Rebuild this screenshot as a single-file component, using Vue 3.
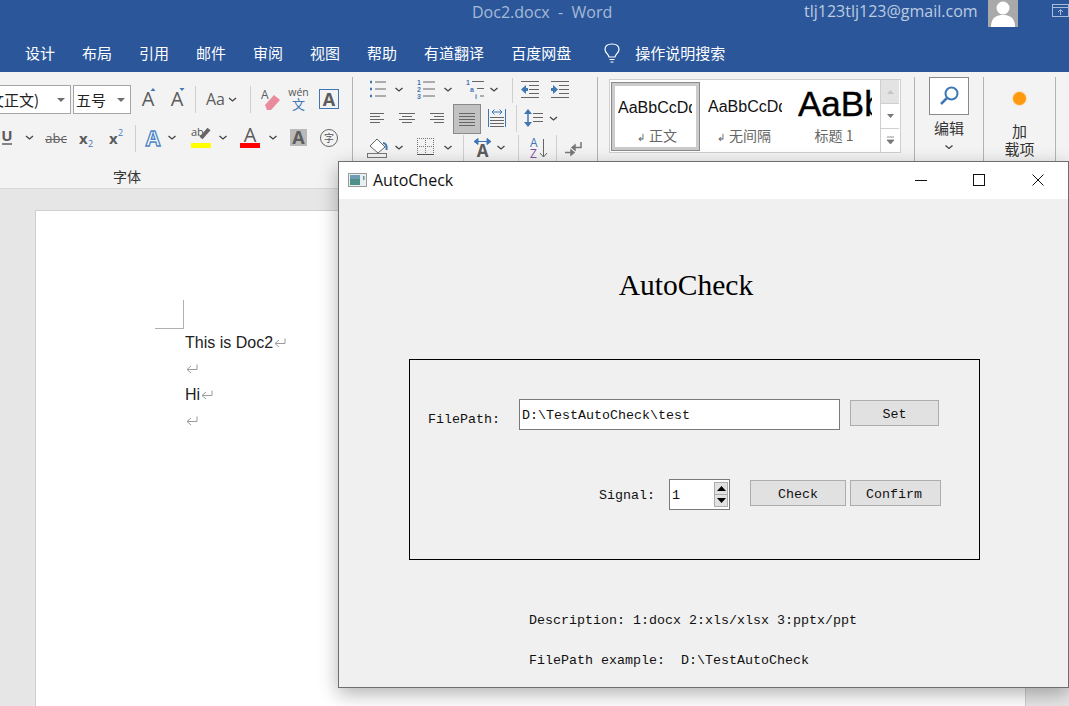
<template>
  <div class="word">
    <header class="titlebar">
      <span class="doc-title">Doc2.docx&nbsp; - &nbsp;Word</span>
      <span class="email">tlj123tlj123@gmail.com</span>
      <svg class="avatar" width="30" height="27">
        <rect width="30" height="27" fill="#a9a9a9" />
        <circle cx="15" cy="8" r="6.5" fill="#fff" />
        <path d="M3 27 C3 17 9 15 15 15 C21 15 27 17 27 27 Z" fill="#fff" />
      </svg>
      <svg class="restore" width="17" height="14">
        <rect x="0.5" y="0.5" width="16" height="12" fill="none" stroke="#a9bcd8" />
        <path d="M1 3.5 H16 M8.5 11 V6 M6 8 L8.5 5.5 L11 8" fill="none" stroke="#a9bcd8" />
      </svg>
    </header>

    <nav class="tabs">
      <span v-for="tab in tabs" :key="tab">{{ tab }}</span>
      <svg class="bulb" width="16" height="20">
        <path d="M5 14 C4.500 11 1 10 1 6.500 C1 3 4 1 8 1 C12 1 15 3 15 6.500 C15 10 11.500 11 11 14 Z M5.500 16.500 H10.500 M6.500 19 H9.500" fill="none" stroke="#fff" stroke-width="1.200" />
      </svg>
      <span class="search-tip">操作说明搜索</span>
    </nav>

    <section class="ribbon">
      <div class="group font-group">
        <div class="row row-a">
          <div class="combo family"><span>等线 (中文正文)</span><i class="caret"></i></div>
          <div class="combo size"><span>五号</span><i class="caret"></i></div>
          <svg class="ic" width="32" height="30">
            <text x="17" y="21" class="glyph" font-size="20" text-anchor="middle">A</text>
            <path d="M19.500 6 L22 3 L24.500 6 Z" class="blue-fill" />
          </svg>
          <svg class="ic" width="27" height="30">
            <text x="14" y="21" class="glyph" font-size="20" text-anchor="middle">A</text>
            <path d="M16.500 3 L19 6 L21.500 3 Z" class="blue-fill" />
          </svg>
          <svg class="ic" width="10" height="30"><path d="M5.500 1 V28" class="rule" /></svg>
          <svg class="ic" width="42" height="30">
            <text x="6" y="20" class="glyph" font-size="16">Aa</text>
            <path d="M29 13 L32.500 16 L36 13" class="chev" />
          </svg>
          <svg class="ic" width="16" height="30"><path d="M8.500 1 V28" class="rule" /></svg>
          <svg class="ic" width="26" height="30">
            <text x="3" y="14" class="glyph" font-size="12">A</text>
            <path d="M7 20 L16 10 L22 15 L13 25 L9 25 Z" fill="#e98a9d" stroke="none" />
          </svg>
          <svg class="ic" width="29" height="30">
            <text x="14.500" y="11" class="thin" font-size="10.500" text-anchor="middle">wén</text>
            <text x="14.500" y="24" class="blue-text" font-size="13" text-anchor="middle">文</text>
          </svg>
          <svg class="ic" width="32" height="30">
            <rect x="6.500" y="4.500" width="19" height="19" stroke="#3f77b5" />
            <text x="16" y="21" class="glyph bold" font-size="18" text-anchor="middle">A</text>
          </svg>
        </div>
        <div class="row row-b">
          <svg class="ic" width="21" height="30">
            <text x="7" y="18" class="glyph bold" font-size="15" text-anchor="middle">U</text>
            <path d="M2 21 H12" stroke="#5f5f5f" stroke-width="1.500" />
          </svg>
          <svg class="ic" width="16" height="30"><path d="M5 13 L8.500 16 L12 13" class="chev" /></svg>
          <svg class="ic" width="35" height="30">
            <text x="19" y="20" class="glyph" font-size="13" text-anchor="middle">abc</text>
            <path d="M8 16.500 H30" class="line" />
          </svg>
          <svg class="ic" width="28" height="30">
            <text x="7" y="21" class="glyph bold" font-size="15">x</text>
            <text x="16" y="24" class="blue-text" font-size="9">2</text>
          </svg>
          <svg class="ic" width="29" height="30">
            <text x="9" y="21" class="glyph bold" font-size="15">x</text>
            <text x="18" y="13" class="blue-text" font-size="9">2</text>
          </svg>
          <svg class="ic" width="12" height="30"><path d="M6.500 2 V29" class="rule" /></svg>
          <svg class="ic" width="24" height="30">
            <text x="12" y="23" class="glow" font-size="21" text-anchor="middle">A</text>
          </svg>
          <svg class="ic" width="15" height="30"><path d="M3.500 13 L7 16 L10.500 13" class="chev" /></svg>
          <svg class="ic" width="36" height="30">
            <text x="11" y="13" class="thin" font-size="11">ab</text>
            <path d="M21 15 L29 6" stroke="#666" stroke-width="4" />
            <rect x="11" y="20" width="20" height="5" fill="#ffff00" stroke="none" />
          </svg>
          <svg class="ic" width="15" height="30"><path d="M3.500 13 L7 16 L10.500 13" class="chev" /></svg>
          <svg class="ic" width="35" height="30">
            <text x="19" y="19" class="glyph" font-size="20" text-anchor="middle">A</text>
            <rect x="9" y="20" width="20" height="5" fill="#ff0000" stroke="none" />
          </svg>
          <svg class="ic" width="15" height="30"><path d="M3.500 13 L7 16 L10.500 13" class="chev" /></svg>
          <svg class="ic" width="34" height="30">
            <rect x="9" y="6" width="17" height="17" fill="#b9b9b9" stroke="none" />
            <text x="17.500" y="21" class="glyph bold" font-size="18" text-anchor="middle">A</text>
          </svg>
          <svg class="ic" width="30" height="30">
            <circle cx="14" cy="15" r="8.500" stroke="#666" />
            <text x="14" y="19" class="thin" font-size="10" text-anchor="middle">字</text>
          </svg>
        </div>
        <div class="group-label">字体</div>
      </div>

      <div class="group para-group">
        <div class="row r1">
          <svg class="ic" width="39" height="26">
            <path d="M17 4 h2 M17 11 h2 M17 18 h2" stroke="#3f77b5" stroke-width="2.500" />
            <path d="M22 4 H33 M22 11 H33 M22 18 H33" class="line" />
          </svg>
          <svg class="ic" width="14" height="26"><path d="M3.500 10 L7 13 L10.500 10" class="chev" /></svg>
          <svg class="ic" width="35" height="26">
            <text x="11" y="7" class="num" font-size="7">1</text>
            <text x="11" y="14" class="num" font-size="7">2</text>
            <text x="11" y="21" class="num" font-size="7">3</text>
            <path d="M17 4 H29 M17 11 H29 M17 18 H29" class="line" />
          </svg>
          <svg class="ic" width="14" height="26"><path d="M3.500 10 L7 13 L10.500 10" class="chev" /></svg>
          <svg class="ic" width="32" height="26">
            <text x="11" y="7" class="num" font-size="7">1</text>
            <text x="15" y="14" class="num" font-size="7">a</text>
            <text x="20" y="21" class="num" font-size="7">i</text>
            <path d="M17 3.500 H29 M22 10.500 H29 M25 18 H29" class="line" />
          </svg>
          <svg class="ic" width="14" height="26"><path d="M3.500 10 L7 13 L10.500 10" class="chev" /></svg>
          <svg class="ic" width="20" height="26"><path d="M11.500 0 V25" class="rule" /></svg>
          <svg class="ic" width="24" height="26">
            <path d="M0 3.500 H18 M8 7.500 H18 M8 11.500 H18 M8 15.500 H18 M0 19.500 H18" class="line" />
            <path d="M0 11.500 L5 7 V10 H7 V13 H5 V16 Z" class="blue-fill" />
          </svg>
          <svg class="ic" width="30" height="26">
            <path d="M6 3.500 H24 M14 7.500 H24 M14 11.500 H24 M14 15.500 H24 M6 19.500 H24" class="line" />
            <path d="M13 11.500 L8 7 V10 H6 V13 H8 V16 Z" class="blue-fill" />
          </svg>
        </div>
        <div class="row r2">
          <svg class="ic" width="38" height="30"><path d="M17 9.500 H31 M17 12.500 H27 M17 15.500 H31 M17 18.500 H27" class="line" /></svg>
          <svg class="ic" width="32" height="30"><path d="M8 9.500 H24 M11 12.500 H21 M8 15.500 H24 M11 18.500 H21" class="line" /></svg>
          <svg class="ic" width="30" height="30"><path d="M7 9.500 H21 M11 12.500 H21 M7 15.500 H21 M11 18.500 H21" class="line" /></svg>
          <div class="active-tool">
            <svg class="ic" width="26" height="28"><path d="M5 8.500 H21 M5 11.500 H21 M5 14.500 H21 M5 17.500 H21 M5 20.500 H21" class="line" /></svg>
          </div>
          <svg class="ic" width="31" height="30">
            <path d="M7.500 5 V23 M24.500 5 V23" stroke="#3f77b5" />
            <path d="M11 8 H21 M11 8 L13.500 5.500 M11 8 L13.500 10.500 M21 8 L18.500 5.500 M21 8 L18.500 10.500" stroke="#3f77b5" />
            <path d="M9 13.500 H23 M9 16.500 H23 M9 19.500 H23 M9 22.500 H23" class="line" />
          </svg>
          <svg class="ic" width="9" height="30"><path d="M4.500 1 V28" class="rule" /></svg>
          <svg class="ic" width="27" height="30">
            <path d="M7 6 V22" stroke="#3f77b5" stroke-width="1.500" />
            <path d="M3 10 L7 5 L11 10 Z M3 18 L7 23 L11 18 Z" class="blue-fill" />
            <path d="M12 9.500 H22 M12 13.500 H22 M12 17.500 H22" class="line" />
          </svg>
          <svg class="ic" width="12" height="30"><path d="M2 13 L5.500 16 L9 13" class="chev" /></svg>
        </div>
        <div class="row r3">
          <svg class="ic" width="39" height="27">
            <path d="M17 11 L24 4 L32 12 L25 18 Z" fill="#fff" stroke="#666" />
            <path d="M30 8 C33 8 34 11 33.500 15" stroke="#3f77b5" stroke-width="2" />
            <rect x="14.500" y="18.500" width="19" height="4" stroke="#777" />
          </svg>
          <svg class="ic" width="14" height="27"><path d="M3.500 11 L7 14 L10.500 11" class="chev" /></svg>
          <svg class="ic" width="35" height="27">
            <path d="M11.500 3 V19 M19.500 3 V19 M27.500 3 V19 M11 3.500 H28 M11 11.500 H28" stroke="#777" stroke-dasharray="1 1" />
            <path d="M11 19.500 H28" stroke="#555" />
          </svg>
          <svg class="ic" width="14" height="27"><path d="M3.500 11 L7 14 L10.500 11" class="chev" /></svg>
          <svg class="ic" width="15" height="27"><path d="M8.500 0 V26" class="rule" /></svg>
          <svg class="ic" width="25" height="27">
            <path d="M5 6.500 H20 M4 6.500 L8 3.500 V9.500 Z M21 6.500 L17 3.500 V9.500 Z" stroke="#3f77b5" class="blue-fill" />
            <text x="12.500" y="22" class="glyph bold" font-size="17" text-anchor="middle">A</text>
          </svg>
          <svg class="ic" width="12" height="27"><path d="M2.500 11 L6 14 L9.500 11" class="chev" /></svg>
          <svg class="ic" width="18" height="27"><path d="M11.500 0 V26" class="rule" /></svg>
          <svg class="ic" width="27" height="27">
            <text x="5" y="12" class="blue-text" font-size="12">A</text>
            <text x="5" y="23" class="purple-text" font-size="12">Z</text>
            <path d="M18.500 4 V22 M15 18 L18.500 22 L22 18" class="line" />
          </svg>
          <svg class="ic" width="9" height="27"><path d="M4.500 0 V26" class="rule" /></svg>
          <svg class="ic" width="29" height="27">
            <path d="M11 12.500 H20 V7 M11 12.500 L14 10 V15 Z" stroke="#777" stroke-width="1.500" />
            <path d="M4 17.500 H13 M13 17.500 L10 15 V20 Z" stroke="#777" stroke-width="1.500" />
          </svg>
        </div>
      </div>

      <div class="group style-group">
        <div class="gallery">
          <div class="style-item selected">
            <div class="style-inner">
              <div class="sample"><span>AaBbCcDd</span></div>
              <div class="style-name"><i>↲</i> 正文</div>
            </div>
          </div>
          <div class="style-item">
            <div class="sample"><span>AaBbCcDd</span></div>
            <div class="style-name"><i>↲</i> 无间隔</div>
          </div>
          <div class="style-item">
            <div class="sample big"><span>AaBb</span></div>
            <div class="style-name">标题 1</div>
          </div>
          <div class="scroller">
            <div class="disabled"><svg width="7" height="4"><path d="M0 4 L3.500 0 L7 4 Z" fill="#c4c4c4" /></svg></div>
            <div><svg width="7" height="4"><path d="M0 0 L3.500 4 L7 0 Z" fill="#777" /></svg></div>
            <div><svg width="9" height="9"><path d="M1 1 H8 M1 4 L4.500 8 L8 4 Z" fill="#777" stroke="#777" stroke-width="0.800" /></svg></div>
          </div>
        </div>
      </div>

      <div class="group edit-group">
        <div class="find-box">
          <svg class="ic" width="38" height="36">
            <circle cx="21.500" cy="15.500" r="6" stroke="#3f77b5" stroke-width="2" />
            <path d="M17 20 L11 26" stroke="#3f77b5" stroke-width="2.500" />
          </svg>
        </div>
        <div class="big-label">编辑</div>
        <svg class="ic" width="10" height="8"><path d="M1.500 1.500 L5 4.500 L8.500 1.500" class="chev" /></svg>
      </div>

      <div class="group addin-group">
        <i class="dot"></i>
        <div class="big-label">加<br />载项</div>
      </div>
    </section>

    <main class="workspace">
      <article class="page">
        <div class="crop-mark"></div>
        <p v-for="(line, i) in docLines" :key="i" class="doc-line">
          {{ line }}<svg width="12" height="10"><path d="M11 0.500 V5.500 H1.500 M5 2 L1 5.500 L5 9" fill="none" stroke="#9b9b9b" /></svg>
        </p>
      </article>
    </main>

    <div class="window">
      <div class="win-title">
        <svg width="19" height="14">
          <rect x="0.500" y="0.500" width="18" height="13" fill="#e9eeee" stroke="#9a9a9a" />
          <rect x="2" y="2" width="10" height="10" fill="#4e8f88" />
          <rect x="2" y="2" width="10" height="4" fill="#6f9cb4" />
          <rect x="15" y="3" width="1.500" height="4" fill="#5f9a94" />
        </svg>
        <span class="win-name">AutoCheck</span>
        <svg class="win-btn min" width="12" height="12"><path d="M0 6.500 H12" stroke="#111" /></svg>
        <svg class="win-btn max" width="12" height="12"><rect x="0.500" y="0.500" width="11" height="11" fill="none" stroke="#111" /></svg>
        <svg class="win-btn close" width="12" height="12"><path d="M0.500 0.500 L11.500 11.500 M11.500 0.500 L0.500 11.500" stroke="#111" /></svg>
      </div>
      <div class="win-body">
        <h1>AutoCheck</h1>
        <div class="frame">
          <div class="frame-row path-row">
            <label>FilePath:</label>
            <div class="line-edit">D:\TestAutoCheck\test</div>
            <button class="set-btn">Set</button>
          </div>
          <div class="frame-row signal-row">
            <label>Signal:</label>
            <div class="spin">
              <span>1</span>
              <div class="spin-btns">
                <div><svg width="9" height="5"><path d="M0 5 L4.500 0 L9 5 Z" fill="#000" /></svg></div>
                <div><svg width="9" height="5"><path d="M0 0 L4.500 5 L9 0 Z" fill="#000" /></svg></div>
              </div>
            </div>
            <button class="check-btn">Check</button>
            <button class="confirm-btn">Confirm</button>
          </div>
        </div>
        <p class="hint first">Description: 1:docx 2:xls/xlsx 3:pptx/ppt</p>
        <p class="hint">FilePath example:&nbsp; D:\TestAutoCheck</p>
      </div>
    </div>
  </div>
</template>

<script setup>
const tabs = ['设计', '布局', '引用', '邮件', '审阅', '视图', '帮助', '有道翻译', '百度网盘']
const docLines = ['This is Doc2', '', 'Hi', '']
</script>

<style>
html,
body {
  margin: 0;
  overflow: hidden;
}
</style>

<style scoped>
.word {
  position: relative;
  width: 1069px;
  height: 706px;
  overflow: hidden;
  background: #e6e6e6;
  font-family: "Open Sans", "Noto Sans CJK SC", sans-serif;
}

.titlebar {
  position: relative;
  height: 36px;
  background: #2b579a;
}
.doc-title {
  position: absolute;
  left: 472px;
  top: 2px;
  font-size: 16px;
  line-height: 20px;
  color: #a6bad7;
}
.email {
  position: absolute;
  left: 804px;
  top: 1px;
  font-size: 16px;
  line-height: 20px;
  color: #bccbe0;
}
.avatar {
  position: absolute;
  left: 988px;
  top: 0;
}
.restore {
  position: absolute;
  left: 1052px;
  top: 4px;
}

.tabs {
  height: 36px;
  box-sizing: border-box;
  padding: 0 0 4px 25px;
  background: #2b579a;
  display: flex;
  align-items: center;
  gap: 27px;
  color: #fff;
  font-size: 15px;
  font-family: "Noto Sans CJK SC", sans-serif;
}
.bulb {
  margin-left: 6px;
  margin-top: 2px;
}
.search-tip {
  margin-left: -12px;
  margin-top: 1px;
}

.ribbon {
  height: 117px;
  display: flex;
  background: #f3f3f3;
  border-bottom: 1px solid #d6d6d6;
  box-sizing: border-box;
  color: #444;
  font-family: "Noto Sans CJK SC", sans-serif;
}
.group {
  flex: none;
  height: 108px;
  margin-top: 5px;
  border-right: 1px solid #b4b4b4;
  box-sizing: content-box;
}
.row {
  display: flex;
}
.ic {
  display: block;
  flex: none;
  fill: none;
  stroke: none;
}
.ic .rule {
  stroke: #cfcfcf;
}
.ic .chev {
  stroke: #444;
  stroke-width: 1.300;
  fill: none;
}
.ic .line {
  stroke: #666;
  stroke-width: 1;
}
.ic .blue-fill {
  fill: #3f77b5;
}
.ic text {
  stroke: none;
}
.ic .glyph {
  fill: #5c5c5c;
  font-family: "Open Sans", sans-serif;
}
.ic .bold {
  font-weight: 700;
}
.ic .thin {
  fill: #555;
  font-family: "Open Sans", "Noto Sans CJK SC", sans-serif;
}
.ic .blue-text {
  fill: #3f77b5;
  font-family: "Open Sans", "Noto Sans CJK SC", sans-serif;
}
.ic .purple-text {
  fill: #7d4f9e;
  font-family: "Open Sans", sans-serif;
}
.ic .num {
  fill: #3f77b5;
  font-family: "Liberation Sans", sans-serif;
  font-weight: 700;
}
.ic .glow {
  fill: #fff;
  stroke: #4c86c6;
  stroke-width: 1.300;
  font-family: "Open Sans", sans-serif;
  font-weight: 700;
}

/* font group runs off the left edge of the window */
.font-group {
  width: 451px;
  margin-left: -98px;
  padding-top: 8px;
  box-sizing: border-box;
  height: 108px;
}
.row-a {
  height: 38px;
}
.row-b {
  height: 32px;
  padding-left: 98px;
}
.group-label {
  margin-top: 11px;
  line-height: 20px;
  font-size: 14px;
  text-align: center;
  color: #333;
}
.combo {
  height: 29px;
  box-sizing: border-box;
  background: #fff;
  border: 1px solid #a6a6a6;
  display: flex;
  align-items: center;
  justify-content: flex-end;
  position: relative;
  font-size: 15px;
  color: #222;
  white-space: nowrap;
}
.family {
  width: 169px;
  margin-right: 2px;
  padding-right: 31px;
}
.size {
  width: 58px;
  justify-content: flex-start;
  padding-left: 2px;
}
.caret {
  position: absolute;
  right: 5px;
  top: 12px;
  width: 0;
  height: 0;
  border-left: 4px solid transparent;
  border-right: 4px solid transparent;
  border-top: 4px solid #6e6e6e;
}

.para-group {
  width: 244px;
  padding-top: 1px;
  height: 107px;
}
.r1 {
  height: 26px;
}
.r2 {
  height: 31px;
}
.r3 {
  height: 27px;
}
.active-tool {
  width: 28px;
  height: 30px;
  flex: none;
  box-sizing: border-box;
  background: #c2c2c2;
  border: 1px solid #8a8a8a;
}

.style-group {
  width: 317px;
  padding: 2px 0 0 11px;
  box-sizing: border-box;
  height: 108px;
}
.gallery {
  width: 292px;
  height: 74px;
  box-sizing: border-box;
  display: flex;
  padding: 2px 0 0 1px;
  background: #fff;
  border: 1px solid #cfcfcf;
  font-family: "Liberation Sans", "Noto Sans CJK SC", sans-serif;
}
.style-item {
  width: 90px;
  flex: none;
  height: 69px;
  box-sizing: border-box;
  padding-left: 8px;
}
.style-item.selected {
  width: 89px;
  padding: 3px;
  background: #cbcbcb;
  border: 1px solid #8a8a8a;
}
.style-inner {
  height: 61px;
  background: #fff;
  padding-left: 3px;
}
.sample {
  width: 74px;
  height: 36px;
  overflow: hidden;
  white-space: nowrap;
  font-size: 16px;
  line-height: 44px;
  color: #111;
}
.style-item:not(.selected) .sample {
  height: 40px;
  line-height: 50px;
}
.sample.big,
.style-item:not(.selected) .sample.big {
  font-size: 35px;
  line-height: 44px;
  color: #000;
  -webkit-text-stroke: 0.400px #000;
}
.style-name {
  text-align: center;
  padding-right: 10px;
  font-size: 14px;
  line-height: 22px;
  margin-top: 2px;
  color: #666;
  font-family: "Noto Sans CJK SC", sans-serif;
}
.selected .style-name {
  margin-top: 2px;
  padding-right: 0;
}
.style-name i {
  font-style: normal;
  font-size: 10px;
  margin-right: 1px;
}
.scroller {
  width: 18px;
  flex: none;
  margin-top: -2px;
  display: flex;
  flex-direction: column;
  border-left: 1px solid #cfcfcf;
}
.scroller div {
  flex: 1;
  display: flex;
  align-items: center;
  justify-content: center;
  border-bottom: 1px solid #cfcfcf;
}
.scroller div:last-child {
  border-bottom: 0;
}
.scroller .disabled {
  background: #e3e3e3;
}

.edit-group {
  width: 68px;
  display: flex;
  flex-direction: column;
  align-items: center;
}
.find-box {
  width: 40px;
  height: 38px;
  box-sizing: border-box;
  background: #fff;
  border: 1px solid #8a8a8a;
}
.big-label {
  font-size: 15px;
  line-height: 18px;
  text-align: center;
  color: #333;
}
.edit-group .big-label {
  margin-top: 4px;
  margin-bottom: 7px;
}
.addin-group {
  width: 71px;
  display: flex;
  flex-direction: column;
  align-items: center;
}
.dot {
  width: 13px;
  height: 13px;
  margin: 15px 0 17px;
  border-radius: 50%;
  background: #ff9a10;
  box-shadow: 0 0 2px #ffb040;
}

.workspace {
  padding: 21px 0 0 35px;
}
.page {
  width: 991px;
  height: 501px;
  box-sizing: border-box;
  background: #fff;
  border: 1px solid #cfcfcf;
  padding-top: 89px;
}
.crop-mark {
  width: 29px;
  height: 29px;
  margin-left: 119px;
  box-sizing: border-box;
  border-right: 1px solid #b0b0b0;
  border-bottom: 1px solid #b0b0b0;
}
.doc-line {
  margin: 0 0 0 149px;
  height: 26px;
  line-height: 27px;
  font-family: "Liberation Sans", sans-serif;
  font-size: 16px;
  color: #222;
}
.doc-line svg {
  margin-left: 1px;
}

.window {
  position: absolute;
  left: 338px;
  top: 161px;
  width: 731px;
  height: 527px;
  box-sizing: border-box;
  border: 1px solid #6e6e6e;
  background: #f0f0f0;
  box-shadow: 0 6px 18px rgba(0, 0, 0, 0.3);
}
.win-title {
  height: 37px;
  box-sizing: border-box;
  padding: 0 0 1px 9px;
  background: #fff;
  display: flex;
  align-items: center;
}
.win-name {
  margin-left: 6px;
  font-size: 16px;
  color: #111;
}
.win-btn {
  flex: none;
}
.win-btn.min {
  margin-left: auto;
}
.win-btn.max {
  margin-left: 46px;
}
.win-btn.close {
  margin: 0 24px 0 47px;
}

.win-body {
  font-family: "Liberation Mono", monospace;
  color: #111;
}
.win-body h1 {
  width: 694px;
  margin: 66px 0 54px;
  font-family: "Liberation Serif", serif;
  font-size: 29.500px;
  font-weight: 400;
  line-height: 40px;
  text-align: center;
  color: #000;
}
.frame {
  width: 571px;
  height: 201px;
  margin-left: 70px;
  box-sizing: border-box;
  border: 1px solid #000;
  padding: 39px 0 0 18px;
  font-size: 13.330px;
}
.frame-row {
  display: flex;
}
.path-row label {
  width: 91px;
  flex: none;
  padding-top: 13px;
  line-height: 15px;
}
.line-edit {
  width: 321px;
  height: 31px;
  box-sizing: border-box;
  background: #fff;
  border: 1px solid #7a7a7a;
  padding-left: 2px;
  line-height: 31px;
}
button {
  height: 26px;
  padding: 2px 0 0;
  font: inherit;
  color: #111;
  background: #e1e1e1;
  border: 1px solid #adadad;
}
.path-row {
  height: 31px;
}
.set-btn {
  width: 89px;
  margin-left: 10px;
  margin-top: 1px;
}
.signal-row {
  margin-top: 49px;
  padding-left: 171px;
}
.signal-row label {
  width: 70px;
  flex: none;
  padding-top: 9px;
  line-height: 15px;
}
.spin {
  width: 61px;
  height: 31px;
  box-sizing: border-box;
  background: #fff;
  border: 1px solid #7a7a7a;
  display: flex;
  justify-content: space-between;
  padding-left: 2px;
  line-height: 31px;
}
.spin-btns {
  width: 14px;
  margin: 2px 1px 2px 0;
  display: flex;
  flex-direction: column;
  background: #e1e1e1;
  border: 1px solid #adadad;
  box-sizing: border-box;
}
.spin-btns div {
  flex: 1;
  display: flex;
  align-items: center;
  justify-content: center;
}
.spin-btns div:first-child {
  border-bottom: 1px solid #adadad;
}
.check-btn {
  width: 96px;
  margin: 1px 0 0 20px;
}
.confirm-btn {
  width: 91px;
  margin: 1px 0 0 4px;
  padding-right: 3px;
}
.hint {
  margin: 20px 0 0 190px;
  height: 20px;
  line-height: 22px;
  font-size: 13.330px;
}
.hint.first {
  margin-top: 50px;
}
</style>
